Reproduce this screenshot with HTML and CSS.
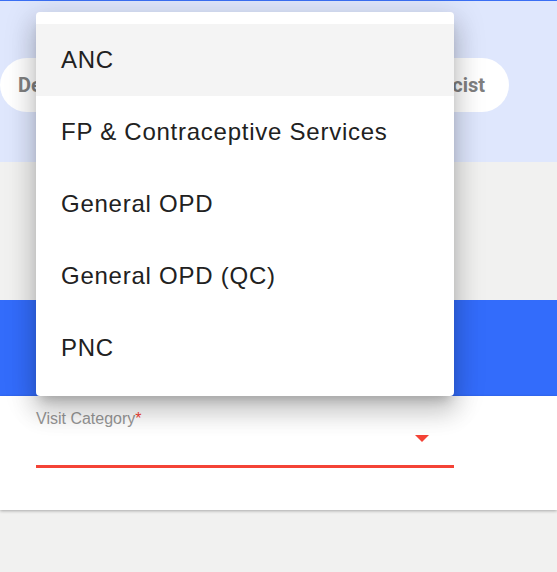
FILE: index.html
```html
<!DOCTYPE html>
<html lang="en">
<head>
<meta charset="utf-8">
<link rel="stylesheet" href="styles.css">
</head>
<body>
<div class="page">
  <header class="hero">
    <div class="pills">
      <div class="pill pill-left">Department</div>
      <div class="pill pill-right">Pharmacist</div>
    </div>
  </header>
  <section class="gray-band"></section>
  <section class="blue-band"></section>
  <section class="card">
    <div class="field">
      <div class="label">Visit Category<span class="req">*</span></div>
      <div class="select">
        <span class="arrow"></span>
      </div>
    </div>
  </section>

  <ul class="menu">
    <li class="item item-active">ANC</li>
    <li class="item">FP &amp; Contraceptive Services</li>
    <li class="item">General OPD</li>
    <li class="item">General OPD (QC)</li>
    <li class="item">PNC</li>
  </ul>
</div>
</body>
</html>
```

FILE: styles.css
```css
* { box-sizing: border-box; }
html, body {
  margin: 0;
  padding: 0;
  background: #f1f1f0;
  font-family: "Liberation Sans", Arial, sans-serif;
}
.page {
  position: relative;
  width: 557px;
  height: 572px;
  overflow: hidden;
}
.hero {
  height: 162px;
  border-top: 1px solid #3a6ff4;
  background: #dfe7fd;
  padding-top: 57px;
}
.pills {
  display: flex;
  justify-content: space-between;
  padding-right: 48px;
}
.pill {
  height: 54px;
  border-radius: 27px;
  background: #ffffff;
  display: flex;
  align-items: center;
  font-family: Roboto, "Liberation Sans", sans-serif;
  font-weight: 700;
  font-size: 20px;
  color: #808080;
}
.pill-left {
  padding: 0 24px 0 18px;
}
.pill-right {
  padding: 0 24px 0 24px;
}
.gray-band {
  height: 138px;
  background: #f1f1f0;
}
.blue-band {
  height: 96px;
  background: #336cfb;
}
.card {
  height: 114px;
  background: #ffffff;
  box-shadow: 0 1px 3px rgba(0, 0, 0, 0.3);
  padding: 14px 0 0 36px;
}
.field {
  width: 418px;
}
.label {
  font-family: "Liberation Sans", Arial, sans-serif;
  font-size: 16px;
  color: #969696;
  line-height: 18px;
}
.req {
  color: #f44336;
}
.select {
  height: 40px;
  border-bottom: 3px solid #f44336;
  display: flex;
  justify-content: flex-end;
  padding: 7px 25px 0 0;
}
.arrow {
  width: 0;
  height: 0;
  border-left: 7px solid transparent;
  border-right: 7px solid transparent;
  border-top: 7px solid #f44336;
}
.menu {
  position: absolute;
  top: 12px;
  left: 36px;
  width: 418px;
  margin: 0;
  padding: 12px 0;
  list-style: none;
  background: #ffffff;
  border-radius: 4px;
  box-shadow: 0 8px 10px -5px rgba(0,0,0,0.2), 0 16px 24px 2px rgba(0,0,0,0.14), 0 6px 30px 5px rgba(0,0,0,0.12);
}
.item {
  height: 72px;
  display: flex;
  align-items: center;
  padding-left: 25px;
  font-size: 24px;
  letter-spacing: 0.75px;
  color: #212121;
}
.item-active {
  background: #f4f4f4;
}
```
